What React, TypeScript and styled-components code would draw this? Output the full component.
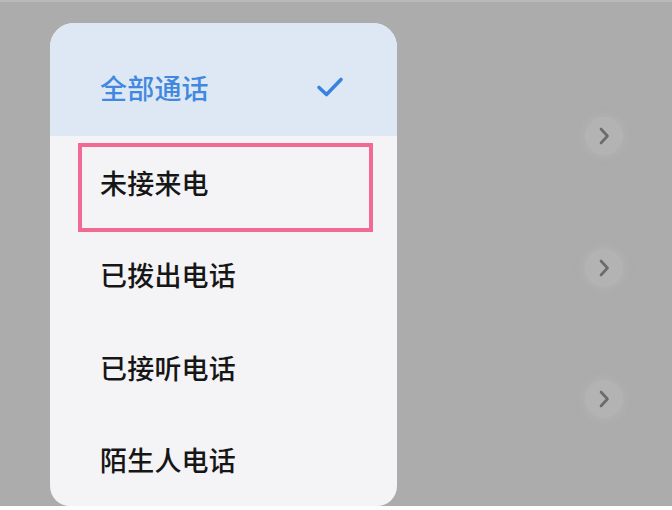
import React from "react";
import styled, { createGlobalStyle } from "styled-components";

const Global = createGlobalStyle`
  html, body { margin: 0; padding: 0; }
  body {
    width: 672px;
    height: 510px;
    overflow: hidden;
    background: #ffffff;
    font-family: "Noto Sans CJK SC", "Noto Sans", sans-serif;
  }
`;

const Screen = styled.div`
  width: 672px;
  height: 506px;
  background: #acacac;
  border-top: 2px solid #b9b9b9;
  box-sizing: border-box;
  display: grid;
  grid-template-columns: 50px 347px 1fr;
  overflow: hidden;
`;

const Menu = styled.div`
  grid-column: 2;
  margin-top: 21px;
  height: 483px;
  background: #f4f4f6;
  border-radius: 24px 24px 20px 20px;
  overflow: hidden;
  display: flex;
  flex-direction: column;
`;

const Item = styled.div<{ $active?: boolean; $first?: boolean }>`
  flex: none;
  box-sizing: border-box;
  padding: ${(p) => (p.$first ? "15px" : "0")} 0 0 50px;
  height: ${(p) => (p.$first ? "113px" : "92.5px")};
  display: flex;
  align-items: center;
  justify-content: space-between;
  background: ${(p) => (p.$active ? "#dee8f4" : "transparent")};
  color: ${(p) => (p.$active ? "#4189e0" : "#161616")};
  font-size: 27px;
  font-weight: 500;
  letter-spacing: 0.2px;
`;

const Label = styled.span`
  position: relative;
  line-height: 1;
`;

const Highlight = styled.div`
  position: absolute;
  left: -22px;
  top: -26px;
  width: 295px;
  height: 89px;
  box-sizing: border-box;
  border: 4px solid #f26a94;
  pointer-events: none;
`;

const Check = styled.svg`
  width: 28px;
  height: 22px;
  margin-right: 53px;
`;

const Side = styled.div`
  grid-column: 3;
  display: flex;
  flex-direction: column;
  align-items: flex-end;
  padding: 115px 49px 0 0;
  gap: 93.5px;
`;

const Arrow = styled.div`
  width: 38px;
  height: 38px;
  border-radius: 50%;
  background: #b3b3b3;
  box-shadow: 0 0 6px 3px rgba(180, 180, 180, 0.6);
  display: flex;
  align-items: center;
  justify-content: center;
`;

const items = ["全部通话", "未接来电", "已拨出电话", "已接听电话", "陌生人电话"];

export default function App() {
  return (
    <>
      <Global />
      <Screen>
        <Menu>
          {items.map((t, i) => (
            <Item key={t} $active={i === 0} $first={i === 0}>
              <Label>
                {t}
                {i === 1 && <Highlight />}
              </Label>
              {i === 0 && (
                <Check viewBox="0 0 28 22">
                  <path
                    d="M3 11.5 L10.5 18.5 L25 3.5"
                    fill="none"
                    stroke="#3a82df"
                    strokeWidth="3.6"
                    strokeLinecap="round"
                    strokeLinejoin="round"
                  />
                </Check>
              )}
            </Item>
          ))}
        </Menu>
        <Side>
          {[0, 1, 2].map((k) => (
            <Arrow key={k}>
              <svg width="14" height="20" viewBox="0 0 14 20">
                <path
                  d="M4 3 L10.5 10 L4 17"
                  fill="none"
                  stroke="#6b6b6b"
                  strokeWidth="2.6"
                  strokeLinecap="round"
                  strokeLinejoin="round"
                />
              </svg>
            </Arrow>
          ))}
        </Side>
      </Screen>
    </>
  );
}
